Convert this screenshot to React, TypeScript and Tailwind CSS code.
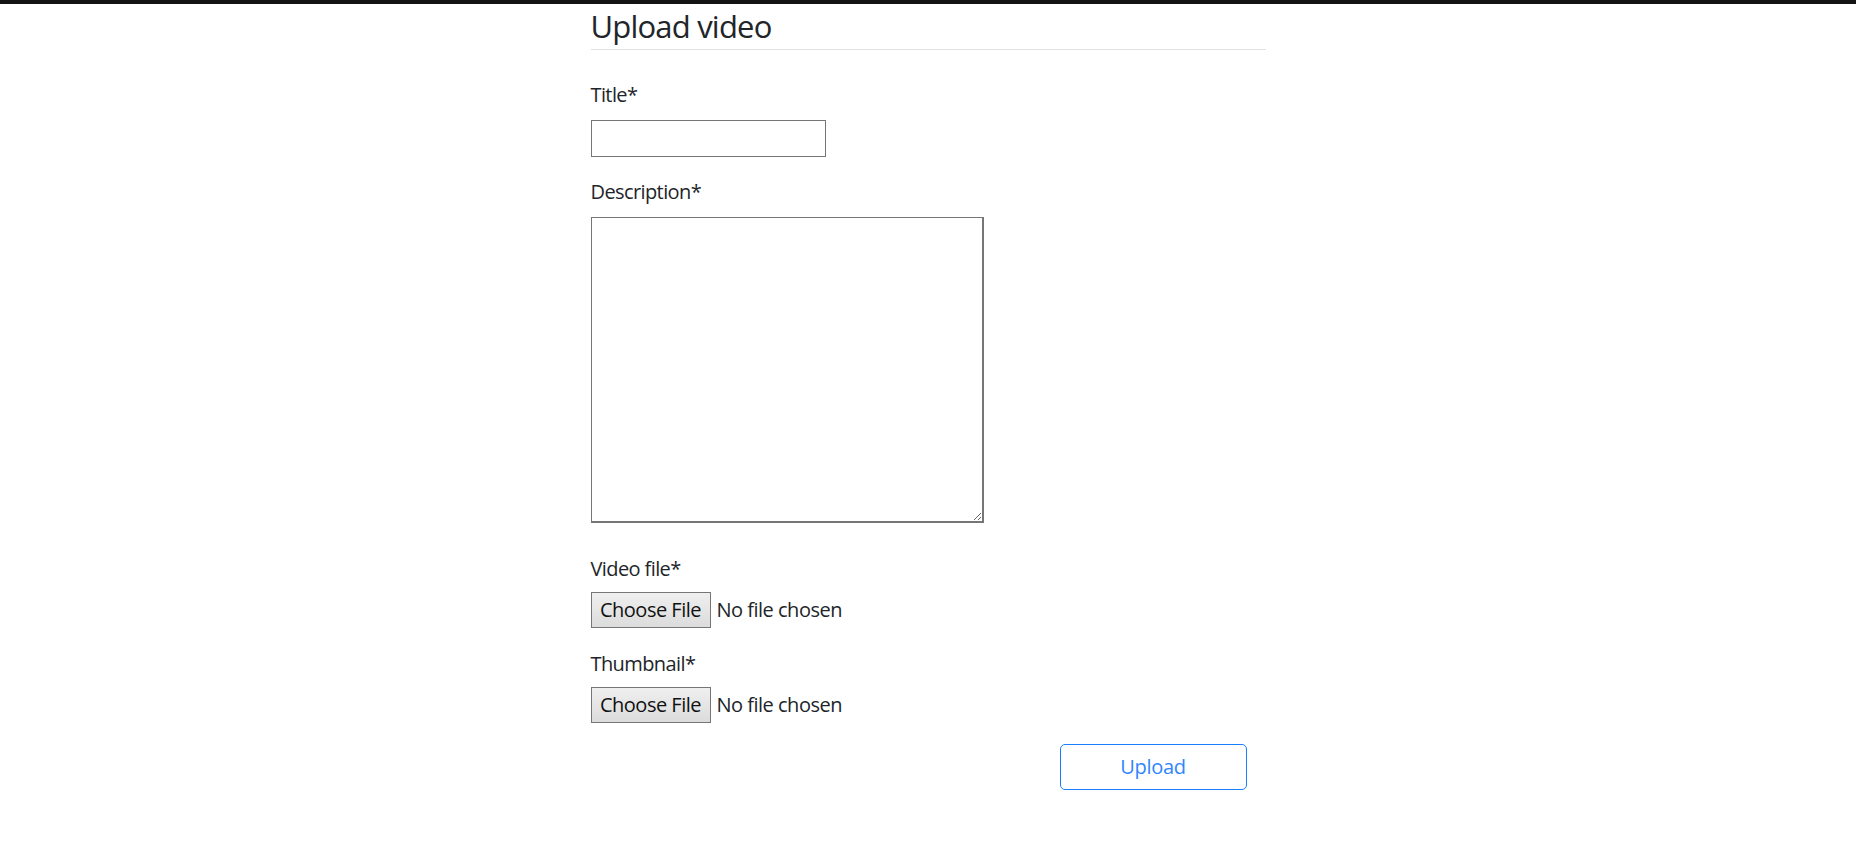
import React from 'react';

const font = { fontFamily: '"Open Sans", "Noto Sans", Arial, sans-serif' };

function Label({ children, tight }: { children: React.ReactNode; tight?: boolean }) {
  return (
    <label
      className={
        'block text-[20px] leading-[30px] tracking-[-0.6px] text-[#212529] ' + (tight ? 'mb-[8px]' : 'mb-[10px]')
      }
    >
      {children}
    </label>
  );
}

function FileInput() {
  return (
    <div className="flex items-center h-[36px]">
      <button
        type="button"
        className="h-[36px] w-[120px] border border-[#767676] bg-gradient-to-b from-[#efefef] to-[#dcdcdc]
                   text-[20px] leading-none tracking-[-0.5px] text-[#111]"
      >
        Choose File
      </button>
      <span className="ml-[6px] text-[20px] tracking-[-0.5px] text-[#212529]">No file chosen</span>
    </div>
  );
}

export default function App() {
  return (
    <div className="min-h-screen bg-white" style={font}>
      <div className="h-[4px] bg-[#141414]" />

      <div className="mx-auto w-[675px]">
        {/* Heading */}
        <h3
          className="text-[31px] leading-[42px] tracking-[-0.8px] font-normal text-[#212529] pt-[1px] pb-[2px]
                     border-b border-[#e0e0e0]"
        >
          Upload video
        </h3>

        <form className="pt-[30px]" onSubmit={(e) => e.preventDefault()}>
          <div className="mb-[20px]">
            <Label>Title*</Label>
            <input type="text" className="block w-[235px] h-[37px] border border-[#767676] px-1 outline-none" />
          </div>

          <div className="mb-[31px]">
            <Label>Description*</Label>
            <textarea
              className="block w-[393px] h-[306px] border-t border-l border-r-2 border-b-2 border-[#767676] outline-none"
            />
          </div>

          <div className="mb-[21px]">
            <Label tight>Video file*</Label>
            <FileInput />
          </div>

          <div className="mb-[21px]">
            <Label tight>Thumbnail*</Label>
            <FileInput />
          </div>

          <div className="flex justify-end pr-[19px]">
            <button
              type="submit"
              className="w-[187px] h-[46px] rounded-[5px] border border-[#1a7fff] text-[#2f86ff] text-[20px] tracking-[-0.3px]"
            >
              Upload
            </button>
          </div>
        </form>
      </div>
    </div>
  );
}
